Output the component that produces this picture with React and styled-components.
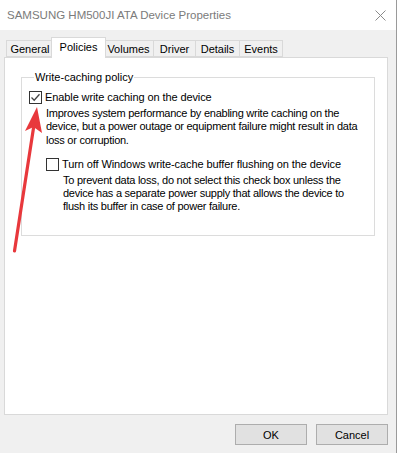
import React from "react";
import styled, { createGlobalStyle } from "styled-components";

const Global = createGlobalStyle`
  html, body {
    margin: 0;
    padding: 0;
    background: #f0f0f0;
  }
  body {
    font-family: "Liberation Sans", Arial, sans-serif;
    font-size: 11px;
    color: #000;
  }
`;

const Window = styled.div`
  position: relative;
  width: 397px;
  height: 453px;
  box-sizing: border-box;
  background: #f0f0f0;
  border-right: 1px solid #9a9a9a;
  display: flex;
  flex-direction: column;
  overflow: hidden;
`;

const TitleBar = styled.div`
  height: 30px;
  flex: none;
  background: #fff;
  display: flex;
  align-items: center;
  justify-content: space-between;
  padding: 0 10px 0 7px;
`;

const Title = styled.div`
  font-family: "Liberation Sans", Arial, sans-serif;
  font-size: 11.5px;
  color: #7b7b7b;
`;

const Body = styled.div`
  flex: 1;
  display: flex;
  flex-direction: column;
  padding: 7px 8px 0 4px;
`;

const TabRow = styled.div`
  display: flex;
  align-items: flex-end;
  height: 20px;
  padding-left: 3px;
`;

const Tab = styled.div`
  box-sizing: border-box;
  width: ${(p) => p.w}px;
  height: ${(p) => (p.active ? 21 : 17)}px;
  margin-left: ${(p) => (p.active ? -3 : -1)}px;
  margin-right: ${(p) => (p.active ? -2 : 0)}px;
  margin-bottom: ${(p) => (p.active ? -1 : 0)}px;
  border: 1px solid #d9d9d9;
  border-bottom: ${(p) => (p.active ? "none" : "1px solid #d9d9d9")};
  background: ${(p) => (p.active ? "#fff" : "#f0f0f0")};
  position: relative;
  z-index: ${(p) => (p.active ? 2 : 1)};
  display: flex;
  justify-content: center;
  padding-top: ${(p) => (p.active ? 3 : 2)}px;
  line-height: 12px;
`;

const Panel = styled.div`
  box-sizing: border-box;
  height: 358px;
  background: #fff;
  border: 1px solid #d9d9d9;
  display: flex;
  flex-direction: column;
`;

const Group = styled.fieldset`
  margin: 13px 12px 0 16px;
  padding: 6px 8px 21px 7px;
  border: 1px solid #dcdcdc;
  display: flex;
  flex-direction: column;
  min-width: 0;
`;

const Legend = styled.legend`
  padding: 0 1px;
  margin-left: 5px;
  line-height: 13px;
`;

const Option = styled.div`
  display: flex;
  align-items: flex-start;
  gap: 3px;
  margin-left: ${(p) => p.indent || 0}px;
  margin-top: ${(p) => p.top || 0}px;
`;

const Box = styled.div`
  box-sizing: border-box;
  width: 13px;
  height: 13px;
  flex: none;
  border: 1px solid #333;
  background: #fff;
  display: flex;
  align-items: center;
  justify-content: center;
`;

const OptionText = styled.div`
  display: flex;
  flex-direction: column;
`;

const Label = styled.div`
  line-height: 13px;
  letter-spacing: -0.1px;
`;

const Desc = styled.div`
  margin-top: 3px;
  margin-left: 1px;
  line-height: 13.3px;
  white-space: nowrap;
  letter-spacing: -0.25px;
`;

const Footer = styled.div`
  display: flex;
  justify-content: flex-end;
  gap: 9px;
  padding-top: 9px;
`;

const Button = styled.button`
  box-sizing: border-box;
  width: 72px;
  height: 21px;
  background: #e1e1e1;
  border: 1px solid #adadad;
  font-family: "Liberation Sans", Arial, sans-serif;
  font-size: 11px;
  color: #000;
  padding: 0;
`;

const Arrow = styled.svg`
  position: absolute;
  left: 0;
  top: 0;
  pointer-events: none;
`;

function Check({ checked }) {
  return (
    <Box>
      {checked && (
        <svg width="11" height="11" viewBox="0 0 11 11">
          <path d="M1.5 5.5 L4.2 8.2 L9.5 2.2" fill="none" stroke="#444" strokeWidth="1.3" />
        </svg>
      )}
    </Box>
  );
}

const tabs = [
  ["General", 48],
  ["Policies", 55],
  ["Volumes", 51],
  ["Driver", 43],
  ["Details", 45],
  ["Events", 44],
];

export default function App() {
  return (
    <Window>
      <Global />
      <TitleBar>
        <Title>SAMSUNG HM500JI ATA Device Properties</Title>
        <svg width="11" height="11" viewBox="0 0 11 11">
          <path d="M0.5 0.5 L10.5 10.5 M10.5 0.5 L0.5 10.5" stroke="#8a8a8a" strokeWidth="1" />
        </svg>
      </TitleBar>
      <Body>
        <TabRow>
          {tabs.map(([name, w]) => (
            <Tab key={name} w={w} active={name === "Policies"}>
              {name}
            </Tab>
          ))}
        </TabRow>
        <Panel>
          <Group>
            <Legend>Write-caching policy</Legend>
            <Option top={1}>
              <Check checked />
              <OptionText>
                <Label>Enable write caching on the device</Label>
                <Desc>
                  Improves system performance by enabling write caching on the
                  <br />
                  device, but a power outage or equipment failure might result in data
                  <br />
                  loss or corruption.
                </Desc>
              </OptionText>
            </Option>
            <Option indent={17} top={11}>
              <Check />
              <OptionText>
                <Label>Turn off Windows write-cache buffer flushing on the device</Label>
                <Desc>
                  To prevent data loss, do not select this check box unless the
                  <br />
                  device has a separate power supply that allows the device to
                  <br />
                  flush its buffer in case of power failure.
                </Desc>
              </OptionText>
            </Option>
          </Group>
        </Panel>
        <Footer>
          <Button>OK</Button>
          <Button>Cancel</Button>
        </Footer>
      </Body>
      <Arrow width="397" height="453" viewBox="0 0 397 453">
        <line x1="14.5" y1="251" x2="33.5" y2="128" stroke="#e8383c" strokeWidth="3.2" strokeLinecap="round" />
        <polygon points="37,107 25,131 33.5,127 42,133" fill="#e8383c" />
      </Arrow>
    </Window>
  );
}
